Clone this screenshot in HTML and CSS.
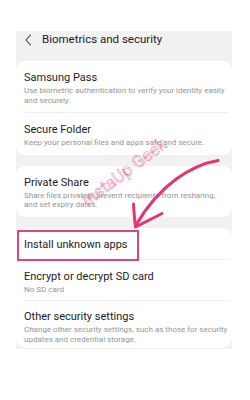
FILE: index.html
```html
<!DOCTYPE html>
<html>
<head>
<meta charset="utf-8">
<link rel="stylesheet" href="styles.css">
</head>
<body>
<div class="screen">
  <div class="header">
    <svg class="back" width="7" height="12" viewBox="0 0 7 12"><polyline points="5.5,1 1,6 5.5,11" fill="none" stroke="#3a3a3a" stroke-width="1.1" stroke-linecap="round" stroke-linejoin="round"/></svg>
    <span class="htitle">Biometrics and security</span>
  </div>
  <div class="card">
    <div class="row">
      <div class="t">Samsung Pass</div>
      <div class="d">Use biometric authentication to verify your identity easily and securely.</div>
    </div>
    <div class="row">
      <div class="t">Secure Folder</div>
      <div class="d">Keep your personal files and apps safe and secure.</div>
    </div>
  </div>
  <div class="card">
    <div class="row">
      <div class="t">Private Share</div>
      <div class="d">Share files privately, prevent recipients from resharing, and set expiry dates.</div>
    </div>
  </div>
  <div class="card compact">
    <div class="row">
      <div class="t">Install unknown apps</div>
    </div>
    <div class="row">
      <div class="t">Encrypt or decrypt SD card</div>
      <div class="d">No SD card</div>
    </div>
    <div class="row">
      <div class="t">Other security settings</div>
      <div class="d">Change other security settings, such as those for security updates and credential storage.</div>
    </div>
  </div>

  <div class="wm">InstaUp Geek</div>
  <div class="hl"></div>
  <svg class="arrow" width="216" height="330" viewBox="16 31 216 330">
    <path d="M218 160.5 C192 165 160 184 136 225" fill="none" stroke="#e2357a" stroke-width="3.2" stroke-linecap="round"/>
    <path d="M133.5 204 C134 212 134.5 220 135.5 227 L162 213.5" fill="none" stroke="#e2357a" stroke-width="3" stroke-linecap="round" stroke-linejoin="round"/>
  </svg>
</div>
</body>
</html>
```
FILE: styles.css
```css
html, body {
  margin: 0;
  padding: 0;
  background: #ffffff;
}
body {
  font-family: Roboto, "Liberation Sans", sans-serif;
  width: 250px;
  height: 400px;
  overflow: hidden;
}
.screen {
  position: relative;
  margin: 31px 0 0 16px;
  width: 216px;
  background: #f1f1f1;
  padding-bottom: 1px;
}
.header {
  height: 30px;
  box-sizing: border-box;
  padding: 1px 0 0 9px;
  display: flex;
  align-items: flex-start;
}
.back {
  margin-top: 2px;
  display: block;
}
.htitle {
  margin-left: 10px;
  font-size: 11.5px;
  line-height: 14px;
  color: #222222;
}
.card {
  background: #ffffff;
  border-radius: 9px;
  padding: 0 4px 0 8px;
}
.card + .card {
  margin-top: 11px;
}
.row {
  padding: 10px 0 7px 0;
}
.row + .row {
  border-top: 1px solid #eeeeee;
}
.compact .row + .row {
  padding-bottom: 6px;
}
.compact .row:last-child {
  padding-top: 9px;
  padding-bottom: 4px;
}
.t {
  font-size: 11px;
  line-height: 14px;
  color: #1c1c1c;
}
.d {
  margin-top: 1px;
  font-size: 8px;
  line-height: 9.5px;
  color: #959595;
}
.wm {
  position: absolute;
  left: 43px;
  top: 131px;
  width: 130px;
  text-align: center;
  font-size: 17px;
  line-height: 20px;
  color: rgba(230, 70, 130, 0.06);
  -webkit-text-stroke: 0.45px #e6709c;
  transform: rotate(-37deg);
}
.hl {
  position: absolute;
  left: 1px;
  top: 199px;
  width: 122px;
  height: 31px;
  box-sizing: border-box;
  border: 2px solid #e0457f;
}
.arrow {
  position: absolute;
  left: 0;
  top: 0;
}
```
